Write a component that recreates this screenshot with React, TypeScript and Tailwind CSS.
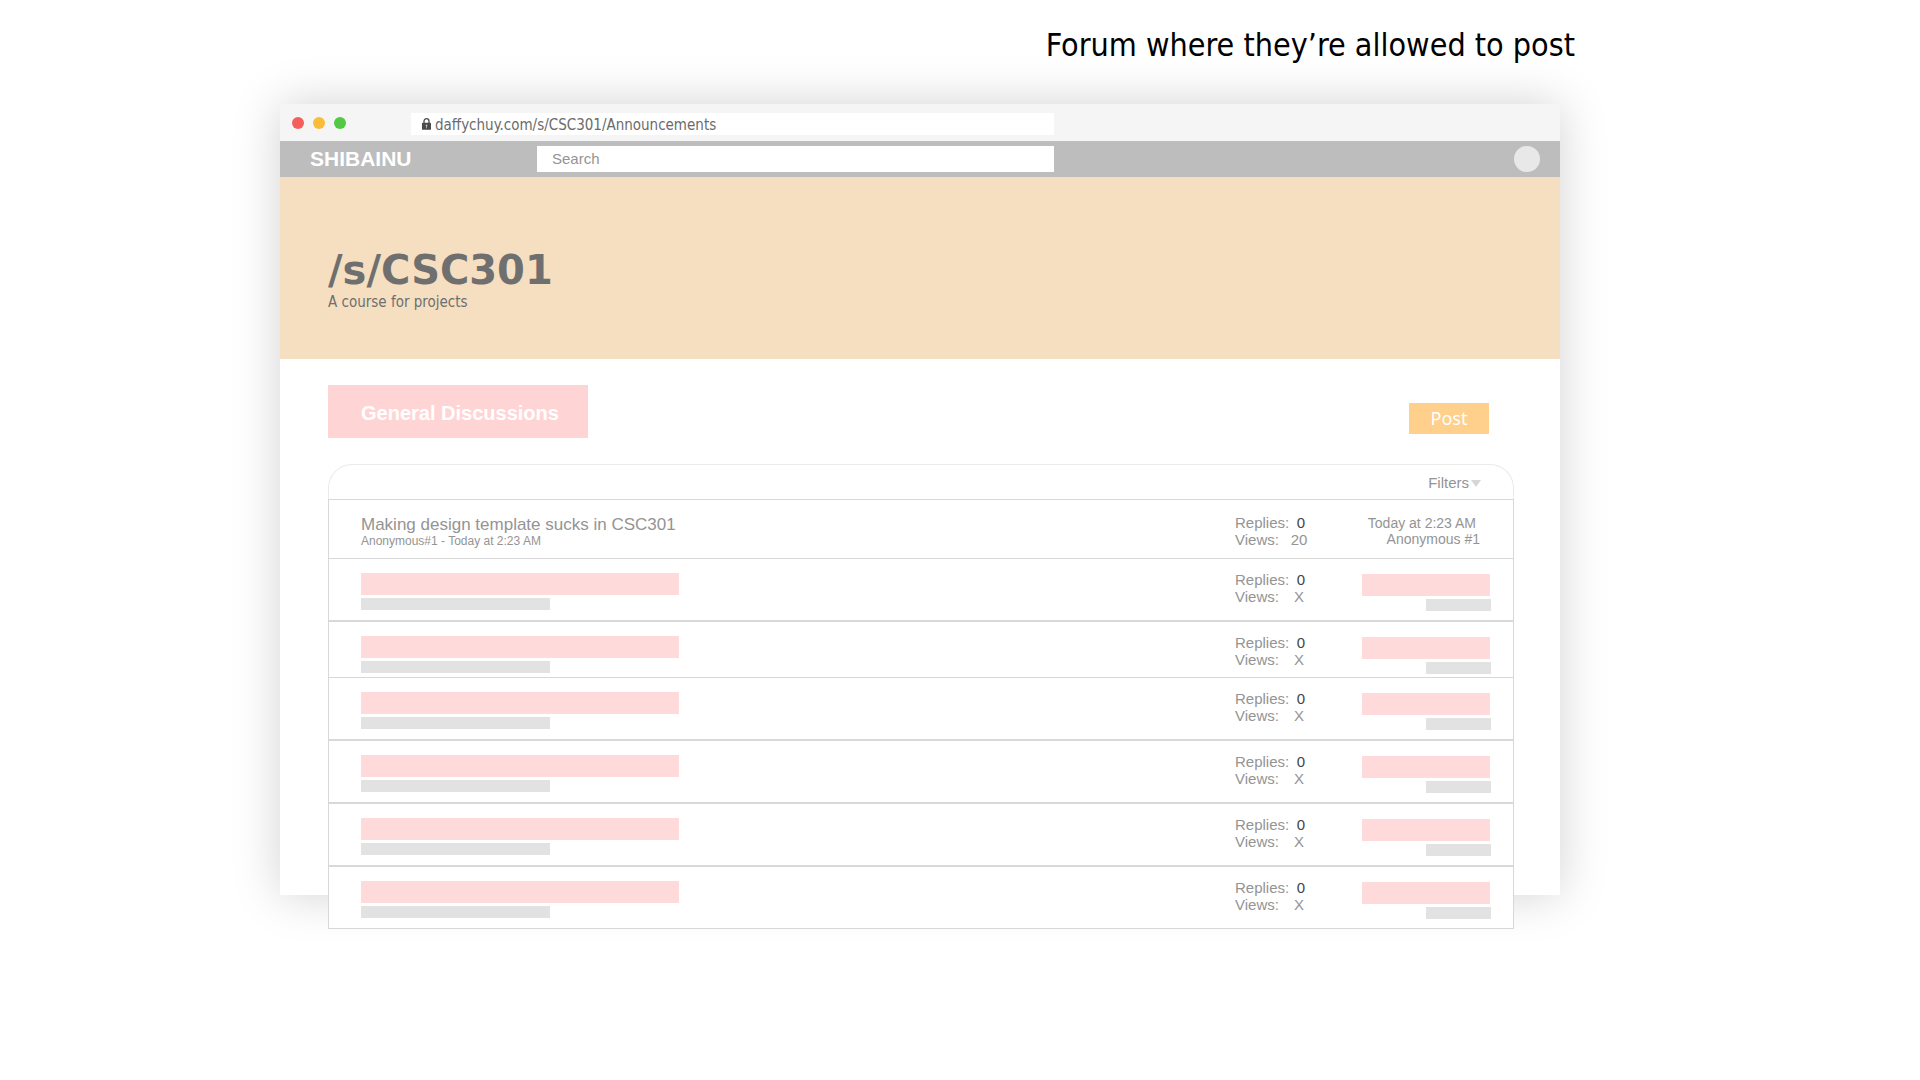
import React from 'react';

type Thread = {
  title?: string;
  byline?: string;
  views: string;
  lastTime?: string;
  lastUser?: string;
  frame: string;
};

const FULL = 'border-y h-[63px] pt-3';
const SHORT = 'border-t h-14 pt-3';
const FIRST = 'border-t h-[59px] pt-3.5';

const threads: Thread[] = [
  {
    title: 'Making design template sucks in CSC301',
    byline: 'Anonymous#1 - Today at 2:23 AM',
    views: '20',
    lastTime: 'Today at 2:23 AM',
    lastUser: 'Anonymous #1',
    frame: FIRST,
  },
  { views: 'X', frame: FULL },
  { views: 'X', frame: SHORT },
  { views: 'X', frame: FULL },
  { views: 'X', frame: FULL },
  { views: 'X', frame: FULL },
  { views: 'X', frame: FULL },
];

function Lock() {
  return (
    <svg className="h-3 w-[9px] shrink-0" viewBox="0 0 9 12" aria-hidden="true">
      <path d="M2 6V3.2a2.5 2.5 0 0 1 5 0V6" fill="none" stroke="#4a4a4a" strokeWidth="1.3" />
      <rect x="0" y="4.8" width="9" height="7" rx="0.6" fill="#4a4a4a" />
      <path d="M4.5 6.6a.9.9 0 0 1 .4 1.7v1.9h-.8V8.300a.9.9 0 0 1 .4-1.700z" fill="#c4c4c4" />
    </svg>
  );
}

function ThreadRow({ t }: { t: Thread }) {
  return (
    <li className={`flex items-start border-x border-[#d8d8d8] pl-8 ${t.frame}`}>
      <div className="min-w-0 flex-1 pt-0.5">
        {t.title ? (
          <>
            <a href="#thread" className="block text-[17px] leading-[18px]">{t.title}</a>
            <p className="text-xs leading-[15px]">{t.byline}</p>
          </>
        ) : (
          <>
            <div className="h-[22px] w-[318px] bg-[#ffdadb]" />
            <div className="mt-[3px] h-3 w-[189px] bg-[#e2e2e2]" />
          </>
        )}
      </div>
      <dl className="grid w-[127px] shrink-0 grid-cols-[52px_24px] text-[15px] leading-[17px]">
        <dt>Replies:</dt>
        <dd className="pl-1 text-center text-[#444]">0</dd>
        <dt>Views:</dt>
        <dd className="text-center">{t.views}</dd>
      </dl>
      {t.lastTime ? (
        <div className="w-[151px] shrink-0 pr-[33px] pt-px text-right text-sm leading-4">
          <p className="pr-1">{t.lastTime}</p>
          <p>{t.lastUser}</p>
        </div>
      ) : (
        <div className="flex w-[151px] shrink-0 flex-col items-end pr-[22px] pt-[3px]">
          <div className="mr-px h-[22px] w-32 bg-[#ffdadb]" />
          <div className="mt-[3px] h-3 w-[65px] bg-[#e2e2e2]" />
        </div>
      )}
    </li>
  );
}

export default function App() {
  return (
    <div className="min-h-screen bg-white pb-24 font-['Liberation_Sans',Arial,sans-serif] text-[#949494]">
      <p className="h-[104px] pr-[345px] pt-6 text-right font-['DejaVu_Sans_Condensed',Tahoma,sans-serif] text-[32px] leading-[42px] text-black">
        Forum where they’re allowed to post
      </p>

      <div className="ml-[280px] mr-[360px] flow-root bg-white shadow-[0_0_45px_rgba(0,0,0,0.18)]">
        <div className="flex h-[37px] items-start bg-[#f5f5f5] pl-3 pt-[9px]">
          <div className="flex w-[119px] gap-[9px] pt-1">
            <span className="size-3 rounded-full bg-[#f45f5c]" />
            <span className="size-3 rounded-full bg-[#fabd3a]" />
            <span className="size-3 rounded-full bg-[#53c943]" />
          </div>
          <div className="flex h-[22px] w-[643px] items-center gap-1 bg-white pl-[11px] font-['DejaVu_Sans_Condensed',Tahoma,sans-serif] text-[15px] text-[#6b6b6b]">
            <Lock />
            <input
              aria-label="Address"
              defaultValue="daffychuy.com/s/CSC301/Announcements"
              className="h-[22px] min-w-0 flex-1 bg-transparent pt-0.5 outline-none"
            />
          </div>
        </div>

        <header className="flex h-9 items-center bg-[#bdbdbd] pr-5">
          <a href="#home" className="w-[257px] pl-[30px] text-[21px] font-bold text-white">SHIBAINU</a>
          <input
            type="search"
            aria-label="Search"
            placeholder="Search"
            className="h-[26px] w-[517px] bg-white px-[15px] pb-0.5 text-[15px] outline-none placeholder:text-[#949494]"
          />
          <button aria-label="Account" className="ml-auto size-[26px] rounded-full bg-[#e8e8e8]" />
        </header>

        <section className="h-[182px] bg-[#f5dfc0] px-12 pt-[70px] text-[#6f6f6f]">
          <h1 className="font-['DejaVu_Sans',Verdana,sans-serif] text-[40px] font-bold leading-[46px]">/s/CSC301</h1>
          <p className="font-['DejaVu_Sans_Condensed',Tahoma,sans-serif] text-[15px] leading-[18px]">A course for projects</p>
        </section>

        <main className="-mb-[34px] pl-12 pr-[46px] pt-[26px]">
          <div className="flex items-start justify-between pr-[25px]">
            <h2 className="h-[53px] w-[260px] bg-[#ffd4d5] pl-[33px] pt-1 text-xl font-bold leading-[49px] text-white">
              General Discussions
            </h2>
            <button className="mt-[18px] h-[31px] w-20 bg-[#ffcf8c] font-['Noto_Sans',sans-serif] text-lg leading-[31px] text-white">
              Post
            </button>
          </div>

          <div className="mt-[26px] bg-white">
            <div className="flex h-[35px] items-center justify-end rounded-t-[24px] border-x border-t border-[#ebebeb] bg-white pr-8 pt-0.5">
              <button className="flex items-center gap-0.5 text-[15px]">
                Filters
                <svg className="h-[7px] w-2.5" viewBox="0 0 10 7" aria-hidden="true">
                  <path d="M0 0h10L5 7z" fill="#d6d6d6" />
                </svg>
              </button>
            </div>
            <ul className="bg-white">
              {threads.map((t, i) => (
                <ThreadRow key={i} t={t} />
              ))}
            </ul>
          </div>
        </main>
      </div>
    </div>
  );
}
